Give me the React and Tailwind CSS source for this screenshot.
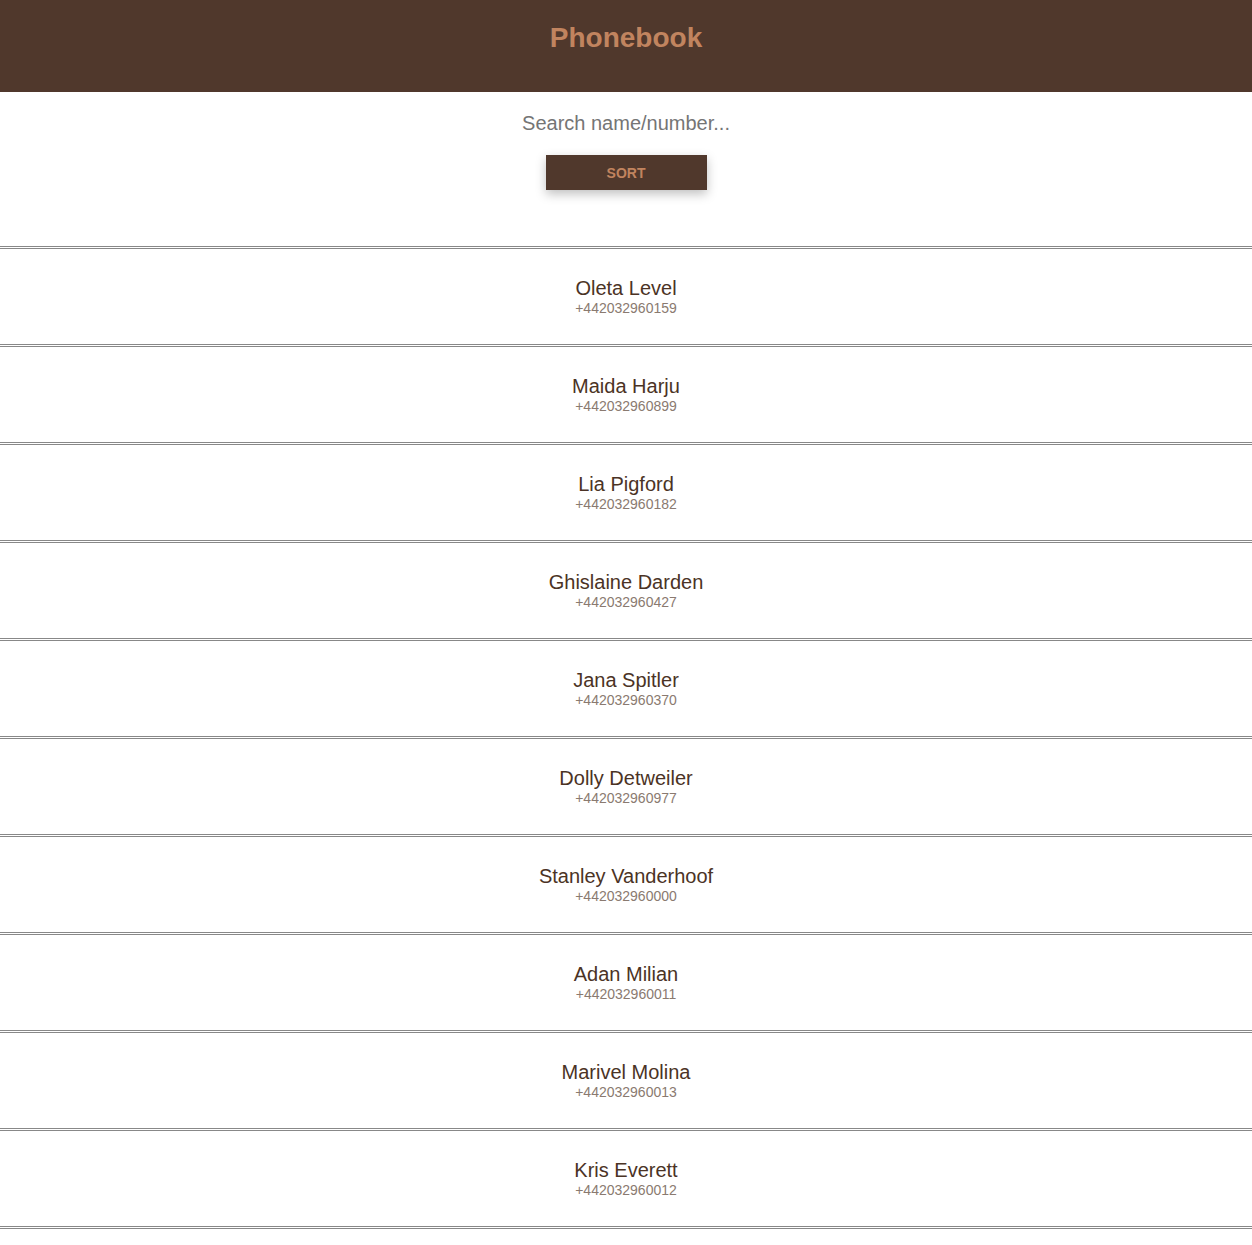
import React from "react";

const contacts = [
  { name: "Oleta Level", phone: "+442032960159" },
  { name: "Maida Harju", phone: "+442032960899" },
  { name: "Lia Pigford", phone: "+442032960182" },
  { name: "Ghislaine Darden", phone: "+442032960427" },
  { name: "Jana Spitler", phone: "+442032960370" },
  { name: "Dolly Detweiler", phone: "+442032960977" },
  { name: "Stanley Vanderhoof", phone: "+442032960000" },
  { name: "Adan Milian", phone: "+442032960011" },
  { name: "Marivel Molina", phone: "+442032960013" },
  { name: "Kris Everett", phone: "+442032960012" },
];

function Divider() {
  return (
    <div className="h-[3px] border-y border-[#888888] bg-white" />
  );
}

export default function App() {
  return (
    <div className="min-h-[1245px] bg-white font-['Liberation_Sans',Arial,sans-serif]">
      {/* header */}
      <header className="h-[92px] bg-[#50382c] flex justify-center pt-[21px]">
        <h1 className="text-[28px] leading-[34px] font-bold text-[#c1845f]">
          Phonebook
        </h1>
      </header>

      {/* search + sort */}
      <div className="flex flex-col items-center pt-[13px]">
        <input
          type="text"
          placeholder="Search name/number..."
          className="w-[400px] h-[36px] text-center text-[20px] text-[#4b3325] placeholder:text-[#757575] outline-none bg-transparent"
        />
        <button className="mt-[14px] w-[161px] h-[35px] pt-[2px] bg-[#50382c] text-[#c1845f] text-[14px] font-bold uppercase shadow-[0_4px_10px_rgba(0,0,0,0.25)]">
          Sort
        </button>
      </div>

      {/* contact list */}
      <div className="mt-[56px]">
        {contacts.map((c) => (
          <div key={c.phone}>
            <Divider />
            <div className="pt-[28px] pb-[28px] flex flex-col items-center">
              <span className="text-[20px] leading-[22px] text-[#4b3325]">
                {c.name}
              </span>
              <span className="mt-[1px] text-[14px] leading-[16px] text-[#8a7a70]">
                {c.phone}
              </span>
            </div>
          </div>
        ))}
        <Divider />
      </div>
    </div>
  );
}
